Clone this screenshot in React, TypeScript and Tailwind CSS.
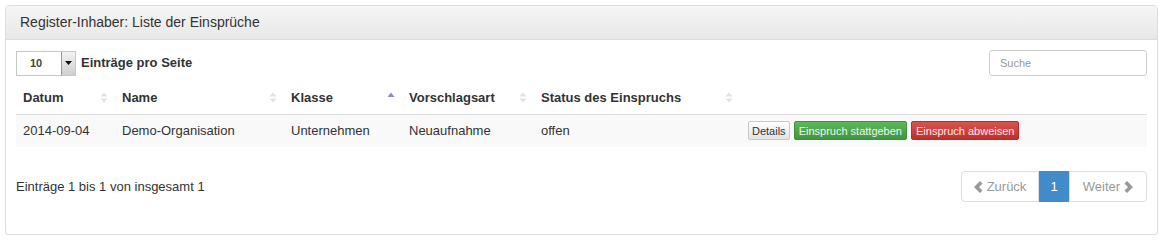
import React from 'react';

const SortBoth: React.FC = () => (
  <svg width="8" height="11" viewBox="0 0 8 11" className="shrink-0">
    <path d="M4 0.5 L7.5 4.5 H0.5 Z" fill="#e2e2e2" />
    <path d="M4 10.5 L7.5 6.5 H0.5 Z" fill="#e2e2e2" />
  </svg>
);

const SortAsc: React.FC = () => (
  <svg width="8" height="11" viewBox="0 0 8 11" className="shrink-0">
    <path d="M4 0.5 L7.5 5 H0.5 Z" fill="#8c8fcf" />
  </svg>
);

const Chevron: React.FC<{ dir: 'left' | 'right' }> = ({ dir }) => (
  <svg width="9" height="12" viewBox="0 0 9 12" className="shrink-0">
    {dir === 'left' ? (
      <path d="M6 0 L8.5 2.5 L5 6 L8.5 9.5 L6 12 L0 6 Z" fill="#999" />
    ) : (
      <path d="M3 0 L0.5 2.5 L4 6 L0.5 9.5 L3 12 L9 6 Z" fill="#999" />
    )}
  </svg>
);

const columns = [
  { label: 'Datum', width: 'w-[99px]', sort: 'both' },
  { label: 'Name', width: 'w-[169px]', sort: 'both' },
  { label: 'Klasse', width: 'w-[118px]', sort: 'asc' },
  { label: 'Vorschlagsart', width: 'w-[132px]', sort: 'both' },
  { label: 'Status des Einspruchs', width: 'w-[206px]', sort: 'both' },
];

export default function App() {
  return (
    <div className="bg-white px-[5px] pt-[5px] font-['Liberation_Sans',Arial,sans-serif] text-[13px] text-[#333]">
      <div className="rounded-[4px] border border-[#dddddd] bg-white shadow-[0_1px_1px_rgba(0,0,0,0.05)]">
        {/* Heading */}
        <div className="flex h-[34px] items-center rounded-t-[3px] border-b border-[#dddddd] bg-gradient-to-b from-[#f5f5f5] to-[#e8e8e8] px-[14px] text-[14px] text-[#333]">
          Register-Inhaber: Liste der Einsprüche
        </div>

        {/* Body */}
        <div className="px-[10px] pb-[32px] pt-[10px]">
          <div className="flex items-center justify-between">
            <div className="flex items-center gap-[5px]">
              <div className="flex h-[25px] w-[60px] items-stretch border border-[#c6c6c6] bg-white">
                <span className="flex flex-1 items-center pl-[13px] text-[11px] font-bold text-[#444]">10</span>
                <span className="flex w-[14px] items-center justify-center border-l border-[#999] bg-gradient-to-b from-[#f2f2f2] to-[#cfcfcf]">
                  <svg width="7" height="4" viewBox="0 0 7 4">
                    <path d="M0 0 H7 L3.5 4 Z" fill="#111" />
                  </svg>
                </span>
              </div>
              <span className="font-bold">Einträge pro Seite</span>
            </div>
            <div className="flex h-[26px] w-[158px] items-center rounded-[3px] border border-[#cccccc] bg-white px-[10px] text-[11px] text-[#999]">
              Suche
            </div>
          </div>

          <table className="mt-[8px] w-full table-fixed border-collapse">
            <thead>
              <tr className="border-b border-[#dddddd]">
                {columns.map((c) => (
                  <th key={c.label} className={`${c.width} h-[30px] px-[7px] pt-[4px] text-left align-top font-bold`}>
                    <div className="flex items-center justify-between">
                      <span>{c.label}</span>
                      {c.sort === 'asc' ? <SortAsc /> : <SortBoth />}
                    </div>
                  </th>
                ))}
                <th className="px-[8px]" />
              </tr>
            </thead>
            <tbody>
              <tr className="bg-[#f9f9f9]">
                <td className="h-[33px] px-[7px] pb-[1px]">2014-09-04</td>
                <td className="px-[7px] pb-[1px]">Demo-Organisation</td>
                <td className="px-[7px] pb-[1px]">Unternehmen</td>
                <td className="px-[7px] pb-[1px]">Neuaufnahme</td>
                <td className="px-[7px] pb-[1px]">offen</td>
                <td className="px-[8px]">
                  <div className="flex items-center gap-[4px] text-[11px]">
                    <span className="flex h-[19px] items-center rounded-[2px] border border-[#c8c8c8] bg-gradient-to-b from-[#ffffff] to-[#e3e3e3] px-[3px] text-[#333]">
                      Details
                    </span>
                    <span className="flex h-[19px] items-center rounded-[2px] border border-[#3e8f3e] bg-gradient-to-b from-[#5cb85c] to-[#419641] px-[4px] text-[#eaf6ea]">
                      Einspruch stattgeben
                    </span>
                    <span className="flex h-[19px] items-center rounded-[2px] border border-[#b92c28] bg-gradient-to-b from-[#d9534f] to-[#c12e2a] px-[4px] text-[#fbeaea]">
                      Einspruch abweisen
                    </span>
                  </div>
                </td>
              </tr>
            </tbody>
          </table>

          <div className="mt-[24px] flex items-center justify-between">
            <span>Einträge 1 bis 1 von insgesamt 1</span>
            <div className="flex h-[31px] items-stretch text-[#999]">
              <span className="flex w-[78px] items-center justify-center gap-[4px] rounded-l-[4px] border border-[#dddddd] bg-white">
                <Chevron dir="left" />
                Zurück
              </span>
              <span className="flex w-[30px] items-center justify-center border border-[#428bca] bg-[#428bca] text-white">
                1
              </span>
              <span className="flex w-[78px] items-center justify-center gap-[4px] rounded-r-[4px] border border-[#dddddd] bg-white">
                Weiter
                <Chevron dir="right" />
              </span>
            </div>
          </div>
        </div>
      </div>
    </div>
  );
}
